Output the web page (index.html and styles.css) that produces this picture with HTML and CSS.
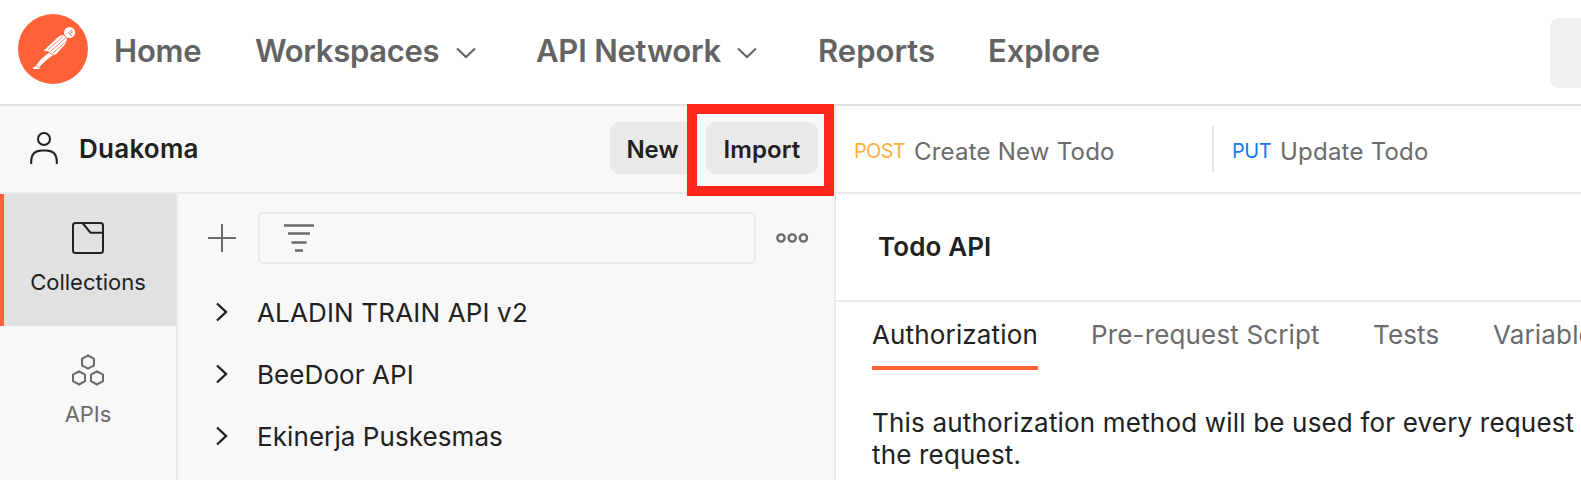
FILE: index.html
```html
<!DOCTYPE html>
<html lang="en">
<head>
<meta charset="utf-8">
<title>Workspace</title>
<link rel="stylesheet" href="styles.css">
</head>
<body>
<div class="app">
  <header class="topbar">
    <svg class="logo" viewBox="0 0 70 70">
      <circle cx="35" cy="35" r="35" fill="#ff6237"/>
      <circle cx="51.600" cy="18.500" r="5.500" fill="#fff"/>
      <path d="M54.500 15.500L50.500 19L54 22M52.500 19.500l2.500-2" stroke="#ff6237" stroke-width=".9" fill="none"/>
      <path d="M25.500 36.700L39 24Q42 21 45.500 21L48.900 24.500Q49 28 46.500 31L38 40.200L34.500 41.500Q26 47.500 21.500 53L22 55H15L15.500 53.200L18 52Q21 46 30.500 39L31.500 37.500L25.500 36.700z" fill="#fff"/>
      <path d="M30 35.700L45 22.500M32.500 37.300L47.500 24M35 39L48.500 27M29.500 38l7.500 3.500M18.500 52l3 2.500" stroke="#ff6237" stroke-width=".7" fill="none"/>
    </svg>
    <nav class="nav">
      <a class="nav-item nav-home">Home</a>
      <a class="nav-item nav-work"><span>Workspaces</span><svg class="caret" viewBox="0 0 20 12"><path d="M1 1.500L10 10L19 1.500"/></svg></a>
      <a class="nav-item nav-net"><span>API Network</span><svg class="caret" viewBox="0 0 20 12"><path d="M1 1.500L10 10L19 1.500"/></svg></a>
      <a class="nav-item nav-rep">Reports</a>
      <a class="nav-item nav-exp">Explore</a>
    </nav>
    <div class="search"></div>
  </header>
  <div class="main">
    <aside class="side">
      <div class="workspace">
        <svg class="user" viewBox="0 0 28 32"><circle cx="14" cy="7" r="6"/><path d="M1.200 32V29.500Q1.200 18.500 12 18.500H16Q26.800 18.500 26.800 29.500V32"/></svg>
        <h1 class="ws-name">Duakoma</h1>
        <button class="btn btn-new">New</button>
        <button class="btn btn-import">Import<span class="highlight"></span></button>
      </div>
      <div class="side-body">
        <div class="rail">
          <div class="rail-item active">
            <svg class="rail-icon" viewBox="0 0 32 32"><rect x="1" y="1" width="30" height="30" rx="2.500"/><path d="M10.500 1L18.500 10.700H31"/></svg>
            <span>Collections</span>
          </div>
          <div class="rail-item">
            <svg class="rail-icon" viewBox="0 0 32 32"><path d="M16 1.500l6 3.300v6.600l-6 3.300l-6-3.300v-6.600zM7 17.300l6 3.300v6.600l-6 3.300l-6-3.300v-6.600zM25 17.300l6 3.300v6.600l-6 3.300l-6-3.300v-6.600z"/></svg>
            <span>APIs</span>
          </div>
        </div>
        <div class="browser">
          <div class="tools">
            <svg class="plus" viewBox="0 0 28 28"><path d="M14 0V28M0 14H28"/></svg>
            <div class="filter"><svg class="filter-icon" viewBox="0 0 30 28"><path d="M0 1.500H30M4 9.500H26M7.500 18.500H22.500M11 26.500H19"/></svg></div>
            <svg class="dots" viewBox="0 0 32 10"><circle cx="5" cy="5" r="3.600"/><circle cx="16.200" cy="5" r="3.600"/><circle cx="27.400" cy="5" r="3.600"/></svg>
          </div>
          <ul class="list">
            <li><svg class="arrow" viewBox="0 0 12 20"><path d="M1 1.500L10 10L1 18.500"/></svg><span class="wide">ALADIN TRAIN API v2</span></li>
            <li><svg class="arrow" viewBox="0 0 12 20"><path d="M1 1.500L10 10L1 18.500"/></svg><span>BeeDoor API</span></li>
            <li><svg class="arrow" viewBox="0 0 12 20"><path d="M1 1.500L10 10L1 18.500"/></svg><span>Ekinerja Puskesmas</span></li>
          </ul>
        </div>
      </div>
    </aside>
    <section class="content">
      <div class="requests">
        <div class="request"><span class="method post">POST</span><span class="req-name">Create New Todo</span></div>
        <div class="request second"><span class="method put">PUT</span><span class="req-name">Update Todo</span></div>
      </div>
      <div class="title">Todo API</div>
      <div class="tabs">
        <span class="tab current">Authorization</span>
        <span class="tab tab-pre">Pre-request Script</span>
        <span class="tab tab-tests">Tests</span>
        <span class="tab">Variables</span>
      </div>
      <p class="desc">This authorization method will be used for every request<br>the request.</p>
    </section>
  </div>
</div>
</body>
</html>
```
FILE: styles.css
```css
* { box-sizing: border-box; }
body { margin: 0; font-family: Inter, "Liberation Sans", sans-serif; color: #212121; background: #fff; overflow: hidden; }
svg { display: block; flex: none; fill: none; overflow: visible; }
.app { display: flex; flex-direction: column; width: 1581px; height: 480px; overflow: hidden; }
.topbar { display: flex; flex: none; height: 106px; border-bottom: 2px solid #e1e1e1; padding-left: 18px; }
.logo { width: 70px; height: 70px; margin-top: 14px; }
.nav { display: flex; height: 100px; align-items: center; padding-left: 26px; flex: 1; }
.nav-item { display: flex; align-items: center; flex: none; font-size: 31px; font-weight: 600; color: #636363; white-space: nowrap; }
.nav-item span { flex: 1; }
.nav-home { width: 141px; letter-spacing: -.2px; }
.nav-work { width: 221px; margin-right: 60px; letter-spacing: -.3px; }
.nav-net { width: 221px; margin-right: 61px; letter-spacing: -.2px; }
.nav-rep { width: 170px; }
.nav-exp { letter-spacing: -.1px; }
.caret { width: 20px; height: 12px; stroke: #636363; stroke-width: 2; margin-top: 6px; }
.search { width: 31px; height: 70px; margin-top: 18px; border-radius: 9px 0 0 9px; background: #efefef; flex: none; }
.main { display: flex; flex: 1; min-height: 0; }
.side { width: 836px; flex: none; display: flex; flex-direction: column; background: #f8f8f8; border-right: 2px solid #eaeaea; }
.workspace { display: flex; flex: none; height: 88px; border-bottom: 2px solid #eaeaea; padding-left: 30px; }
.user { width: 28px; height: 32px; margin-top: 26px; stroke: #212121; stroke-width: 2; }
.ws-name { margin: 0 0 0 21px; flex: 1; font-size: 26px; font-weight: 600; line-height: 85px; letter-spacing: .25px; }
.btn { position: relative; height: 52px; margin: 16px 0 0; padding: 3px 0 0; border: 0; border-radius: 9px; background: #eaeaea; color: #212121; font: 600 24px/49px Inter, sans-serif; }
.btn-new { width: 85px; margin-right: 11px; }
.btn-import { width: 112px; margin-right: 16px; letter-spacing: .1px; }
.highlight { position: absolute; left: -19px; top: -18px; width: 147px; height: 92px; border: 10px solid #ff261a; }
.side-body { display: flex; flex: 1; min-height: 0; }
.rail { width: 178px; flex: none; border-right: 2px solid #eaeaea; }
.rail-item { height: 132px; display: flex; flex-direction: column; align-items: center; padding-top: 28px; font-size: 22px; line-height: 30px; color: #6b6b6b; }
.rail-item.active { background: #e1e1e1; color: #212121; box-shadow: inset 4px 0 #ff6237; }
.rail-icon { width: 32px; height: 32px; stroke: currentColor; stroke-width: 2; margin-bottom: 13px; }
.browser { flex: 1; }
.tools { display: flex; align-items: center; height: 52px; margin-top: 18px; padding-left: 30px; }
.plus { width: 28px; height: 28px; stroke: #6b6b6b; stroke-width: 2; }
.filter { width: 498px; height: 52px; margin-left: 22px; border: 2px solid #eaeaea; border-radius: 5px; padding: 10px 0 0 24px; }
.filter-icon { width: 30px; height: 28px; stroke: #6b6b6b; stroke-width: 2.5; }
.dots { width: 32px; height: 10px; margin-left: 20px; stroke: #6b6b6b; stroke-width: 2.4; }
.list { list-style: none; margin: 17px 0 0; padding: 0 0 0 38px; }
.list li { display: flex; align-items: center; height: 62px; font-size: 26px; letter-spacing: .08px; white-space: nowrap; }
.list .wide { letter-spacing: .16px; }
.arrow { width: 12px; height: 20px; margin-right: 29px; stroke: #212121; stroke-width: 2.4; }
.content { flex: 1; min-width: 0; }
.requests { display: flex; height: 88px; border-bottom: 2px solid #eaeaea; color: #6b6b6b; }
.request { display: flex; width: 376px; flex: none; padding-left: 18px; line-height: 92px; font-size: 24px; letter-spacing: .22px; white-space: nowrap; }
.method { font-size: 20px; width: 60px; line-height: 90px; letter-spacing: -.7px; }
.post { color: #ffb040; }
.put { color: #1877f2; width: 48px; letter-spacing: -.4px; }
.second { height: 46px; margin-top: 20px; border-left: 2px solid #e4e4e4; line-height: 52px; }
.second .method { line-height: 50px; }
.title { height: 108px; border-bottom: 2px solid #eaeaea; padding-left: 42px; font-size: 26px; font-weight: 600; line-height: 105px; letter-spacing: .12px; }
.tabs { display: flex; height: 68px; padding-left: 36px; font-size: 26px; line-height: 66px; letter-spacing: .15px; color: #6b6b6b; white-space: nowrap; }
.tab { flex: none; }
.current { width: 166px; margin-right: 53px; color: #212121; border-bottom: 4px solid #ff6237; }
.tab-pre { width: 282px; }
.tab-tests { width: 120px; }
.desc { margin: 37px 0 0 36px; font-size: 26px; line-height: 32px; letter-spacing: .18px; white-space: nowrap; }
```
